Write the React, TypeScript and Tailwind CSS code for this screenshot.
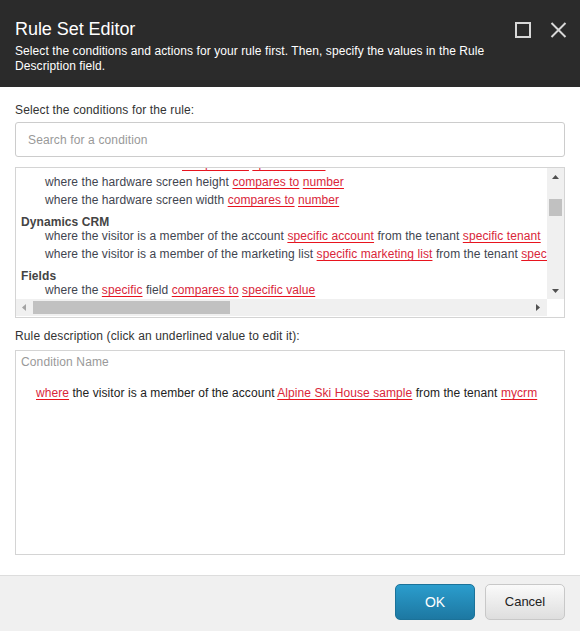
import React from "react";

const L = ({ children }: { children: React.ReactNode }) => (
  <span className="text-[#d9263a] underline decoration-[#e8141e] underline-offset-[2px]">{children}</span>
);

const Item = ({ children }: { children: React.ReactNode }) => (
  <div className="h-[18px] leading-[18px] pl-[29px] whitespace-nowrap">{children}</div>
);

const Head = ({ children }: { children: React.ReactNode }) => (
  <div className="h-[14px] leading-[14px] pl-[5px] mt-[6px] font-bold text-[#444] whitespace-nowrap">{children}</div>
);

export default function App() {
  return (
    <div className="w-[580px] h-[631px] bg-white flex flex-col font-['Liberation_Sans',Arial,sans-serif] overflow-hidden">
      {/* Header */}
      <div className="h-[87px] bg-[#2b2b2b] flex justify-between px-[15px] shrink-0">
        <div className="pt-[18px] text-white">
          <div className="text-[18px] leading-[22px] tracking-[-0.05px]">Rule Set Editor</div>
          <div className="mt-[4px] text-[12px] leading-[15px] tracking-[0.08px] w-[500px]">
            Select the conditions and actions for your rule first. Then, specify the values in the Rule Description field.
          </div>
        </div>
        <div className="flex items-start gap-[19px] pt-[22px] pr-[2px]">
          <svg width="16" height="16" viewBox="0 0 16 16">
            <rect x="1" y="1" width="14" height="14" fill="none" stroke="#d8d8d8" strokeWidth="2" />
          </svg>
          <svg width="17" height="16" viewBox="0 0 17 16">
            <path d="M1.5 1 L15.5 15 M15.5 1 L1.5 15" stroke="#d8d8d8" strokeWidth="2" />
          </svg>
        </div>
      </div>

      {/* Body */}
      <div className="px-[15px] pt-[15px] flex flex-col text-[12px] tracking-[0.13px]">
        <div className="leading-[16px] text-[#333]">Select the conditions for the rule:</div>
        <div className="mt-[4px] h-[35px] border border-[#cccccc] rounded-[3px] pl-[12px] flex items-center text-[#999] text-[12px]">
          Search for a condition
        </div>

        {/* Condition list */}
        <div className="mt-[10px] h-[151px] border border-[#d4d4d4] flex flex-col">
          <div className="flex h-[131px]">
            <div className="flex-1 overflow-hidden text-[#3f4550] tracking-[0.08px]">
              <div className="-mt-[13px]">
                <Item>
                  <span className="inline-block w-[137px]"></span>
                  <L>compares to</L> <L>specific value</L>
                </Item>
                <Item>
                  where the hardware screen height <L>compares to</L> <L>number</L>
                </Item>
                <Item>
                  where the hardware screen width <L>compares to</L> <L>number</L>
                </Item>
                <Head>Dynamics CRM</Head>
                <div className="-mt-[2px]">
                  <Item>
                    where the visitor is a member of the account <L>specific account</L> from the tenant <L>specific tenant</L>
                  </Item>
                  <Item>
                    where the visitor is a member of the marketing list <L>specific marketing list</L> from the tenant <L>specific tenant</L>
                  </Item>
                </div>
                <Head>Fields</Head>
                <div className="-mt-[2px]">
                  <Item>
                    where the <L>specific</L> field <L>compares to</L> <L>specific value</L>
                  </Item>
                </div>
              </div>
            </div>
            {/* vertical scrollbar */}
            <div className="w-[17px] bg-[#f0f0f0] relative shrink-0">
              <svg className="absolute left-[5px] top-[7px]" width="7" height="4" viewBox="0 0 7 4">
                <polygon points="0,4 7,4 3.5,0" fill="#505050" />
              </svg>
              <div className="absolute left-[2px] top-[31px] w-[13px] h-[17px] bg-[#c1c1c1]" />
              <svg className="absolute left-[5px] top-[121px]" width="7" height="4" viewBox="0 0 7 4">
                <polygon points="0,0 7,0 3.5,4" fill="#505050" />
              </svg>
            </div>
          </div>
          {/* horizontal scrollbar */}
          <div className="flex h-[17px]">
            <div className="flex-1 bg-[#f0f0f0] relative">
              <svg className="absolute left-[6px] top-[5px]" width="4" height="7" viewBox="0 0 4 7">
                <polygon points="4,0 4,7 0,3.5" fill="#a3a3a3" />
              </svg>
              <div className="absolute left-[17px] top-[2px] w-[197px] h-[13px] bg-[#c1c1c1]" />
              <svg className="absolute right-[7px] top-[5px]" width="4" height="7" viewBox="0 0 4 7">
                <polygon points="0,0 0,7 4,3.5" fill="#505050" />
              </svg>
            </div>
            <div className="w-[17px] bg-white" />
          </div>
        </div>

        <div className="mt-[10px] leading-[16px] text-[#333]">Rule description (click an underlined value to edit it):</div>
        <div className="mt-[6px] h-[205px] border border-[#d4d4d4]">
          <div className="pt-[3px] pl-[5px] leading-[16px] text-[#999]">Condition Name</div>
          <div className="mt-[15px] pl-[20px] leading-[16px] text-[#222] whitespace-nowrap tracking-[0.07px]">
            <L>where</L> the visitor is a member of the account <L>Alpine Ski House sample</L> from the tenant <L>mycrm</L>
          </div>
        </div>
      </div>

      {/* Footer */}
      <div className="mt-[20px] flex-1 bg-[#f0f0f0] border-t border-[#dddddd] flex justify-end items-start gap-[10px] pr-[15px] pt-[8px]">
        <button className="w-[80px] h-[36px] rounded-[5px] border border-[#1b7299] bg-gradient-to-b from-[#2b9dcd] to-[#1d78a2] text-white text-[14px]">
          OK
        </button>
        <button className="w-[80px] h-[36px] rounded-[5px] border border-[#c8c8c8] bg-gradient-to-b from-[#fafafa] to-[#dedede] text-[#222] text-[13px]">
          Cancel
        </button>
      </div>
    </div>
  );
}
